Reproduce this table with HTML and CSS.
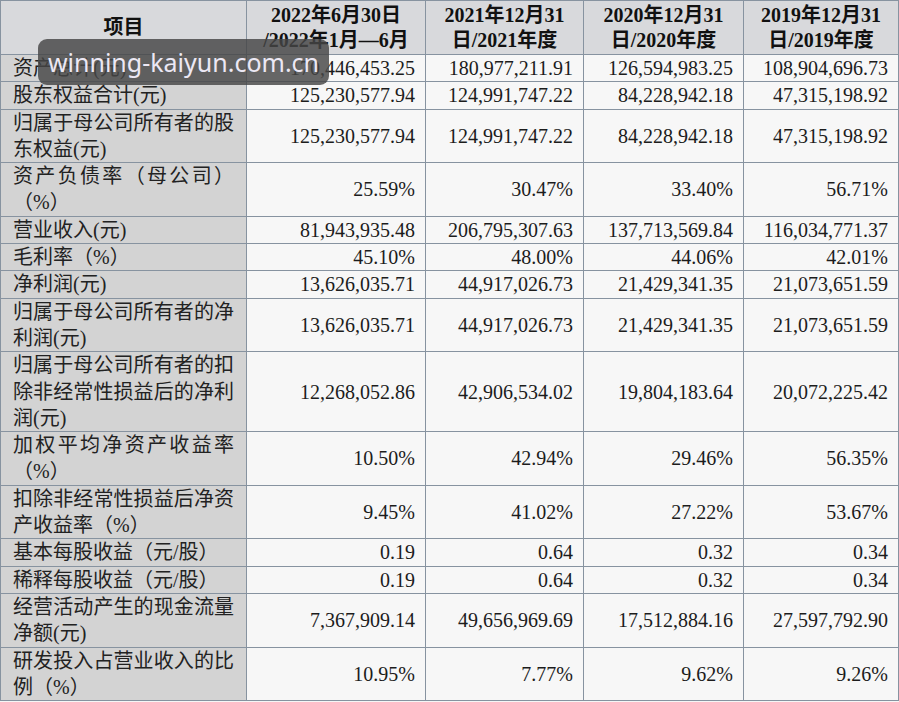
FILE: index.html
```html
<!DOCTYPE html>
<html lang="zh-CN">
<head>
<meta charset="utf-8">
<title>主要财务数据</title>
<link rel="stylesheet" href="styles.css">
</head>
<body>
<div class="wrap">
<table class="fin">
  <colgroup>
    <col class="c0"><col class="c1"><col class="c2"><col class="c3"><col class="c4">
  </colgroup>
  <thead>
    <tr>
      <th class="item">项目</th>
      <th>2022年6月30日<br>/2022年1月—6月</th>
      <th>2021年12月31<br>日/2021年度</th>
      <th>2020年12月31<br>日/2020年度</th>
      <th>2019年12月31<br>日/2019年度</th>
    </tr>
  </thead>
  <tbody>
    <tr><td class="lab">资产总计(元)</td><td>170,446,453.25</td><td>180,977,211.91</td><td>126,594,983.25</td><td>108,904,696.73</td></tr>
    <tr><td class="lab">股东权益合计(元)</td><td>125,230,577.94</td><td>124,991,747.22</td><td>84,228,942.18</td><td>47,315,198.92</td></tr>
    <tr><td class="lab">归属于母公司所有者的股东权益(元)</td><td>125,230,577.94</td><td>124,991,747.22</td><td>84,228,942.18</td><td>47,315,198.92</td></tr>
    <tr><td class="lab">资产负债率（母公司）（%）</td><td>25.59%</td><td>30.47%</td><td>33.40%</td><td>56.71%</td></tr>
    <tr><td class="lab">营业收入(元)</td><td>81,943,935.48</td><td>206,795,307.63</td><td>137,713,569.84</td><td>116,034,771.37</td></tr>
    <tr><td class="lab">毛利率（%）</td><td>45.10%</td><td>48.00%</td><td>44.06%</td><td>42.01%</td></tr>
    <tr><td class="lab">净利润(元)</td><td>13,626,035.71</td><td>44,917,026.73</td><td>21,429,341.35</td><td>21,073,651.59</td></tr>
    <tr><td class="lab">归属于母公司所有者的净利润(元)</td><td>13,626,035.71</td><td>44,917,026.73</td><td>21,429,341.35</td><td>21,073,651.59</td></tr>
    <tr><td class="lab">归属于母公司所有者的扣除非经常性损益后的净利润(元)</td><td>12,268,052.86</td><td>42,906,534.02</td><td>19,804,183.64</td><td>20,072,225.42</td></tr>
    <tr><td class="lab">加权平均净资产收益率（%）</td><td>10.50%</td><td>42.94%</td><td>29.46%</td><td>56.35%</td></tr>
    <tr><td class="lab">扣除非经常性损益后净资产收益率（%）</td><td>9.45%</td><td>41.02%</td><td>27.22%</td><td>53.67%</td></tr>
    <tr><td class="lab">基本每股收益（元/股）</td><td>0.19</td><td>0.64</td><td>0.32</td><td>0.34</td></tr>
    <tr><td class="lab">稀释每股收益（元/股）</td><td>0.19</td><td>0.64</td><td>0.32</td><td>0.34</td></tr>
    <tr><td class="lab">经营活动产生的现金流量净额(元)</td><td>7,367,909.14</td><td>49,656,969.69</td><td>17,512,884.16</td><td>27,597,792.90</td></tr>
    <tr><td class="lab">研发投入占营业收入的比例（%）</td><td>10.95%</td><td>7.77%</td><td>9.62%</td><td>9.26%</td></tr>
  </tbody>
</table>
<div class="watermark">winning-kaiyun.com.cn</div>
</div>
</body>
</html>
```

FILE: styles.css
```css
html, body {
  margin: 0;
  padding: 0;
  background: #f6f6f6;
}

.wrap {
  position: relative;
  width: 899px;
  height: 702px;
  overflow: hidden;
}

.fin {
  border-collapse: collapse;
  table-layout: fixed;
  width: 898px;
  font-family: "Liberation Serif", "Noto Sans CJK SC", serif;
  font-size: 20px;
  color: #1c1c1c;
}

.c0 { width: 246px; }
.c1 { width: 179px; }
.c2 { width: 158px; }
.c3 { width: 160px; }
.c4 { width: 155px; }

.fin th,
.fin td {
  border: 1px solid #8793a0;
  padding: 0;
  line-height: 26.3px;
  vertical-align: middle;
}

.fin th {
  background: #d8d9dc;
  font-weight: bold;
  text-align: center;
  height: 53px;
  line-height: 25px;
  color: #111;
}

.fin td {
  background: #f7f7f7;
  text-align: right;
  padding-right: 10px;
}

.fin td.lab {
  background: #d3d3d3;
  text-align: justify;
  padding-left: 12px;
  padding-right: 12px;
  color: #222;
}

.watermark {
  position: absolute;
  left: 38px;
  top: 39px;
  width: 291px;
  height: 46px;
  border-radius: 9px;
  background: rgba(70, 70, 70, 0.82);
  color: #ece8f4;
  font-family: "Noto Sans", sans-serif;
  font-size: 25px;
  line-height: 46px;
  text-align: center;
}
```
